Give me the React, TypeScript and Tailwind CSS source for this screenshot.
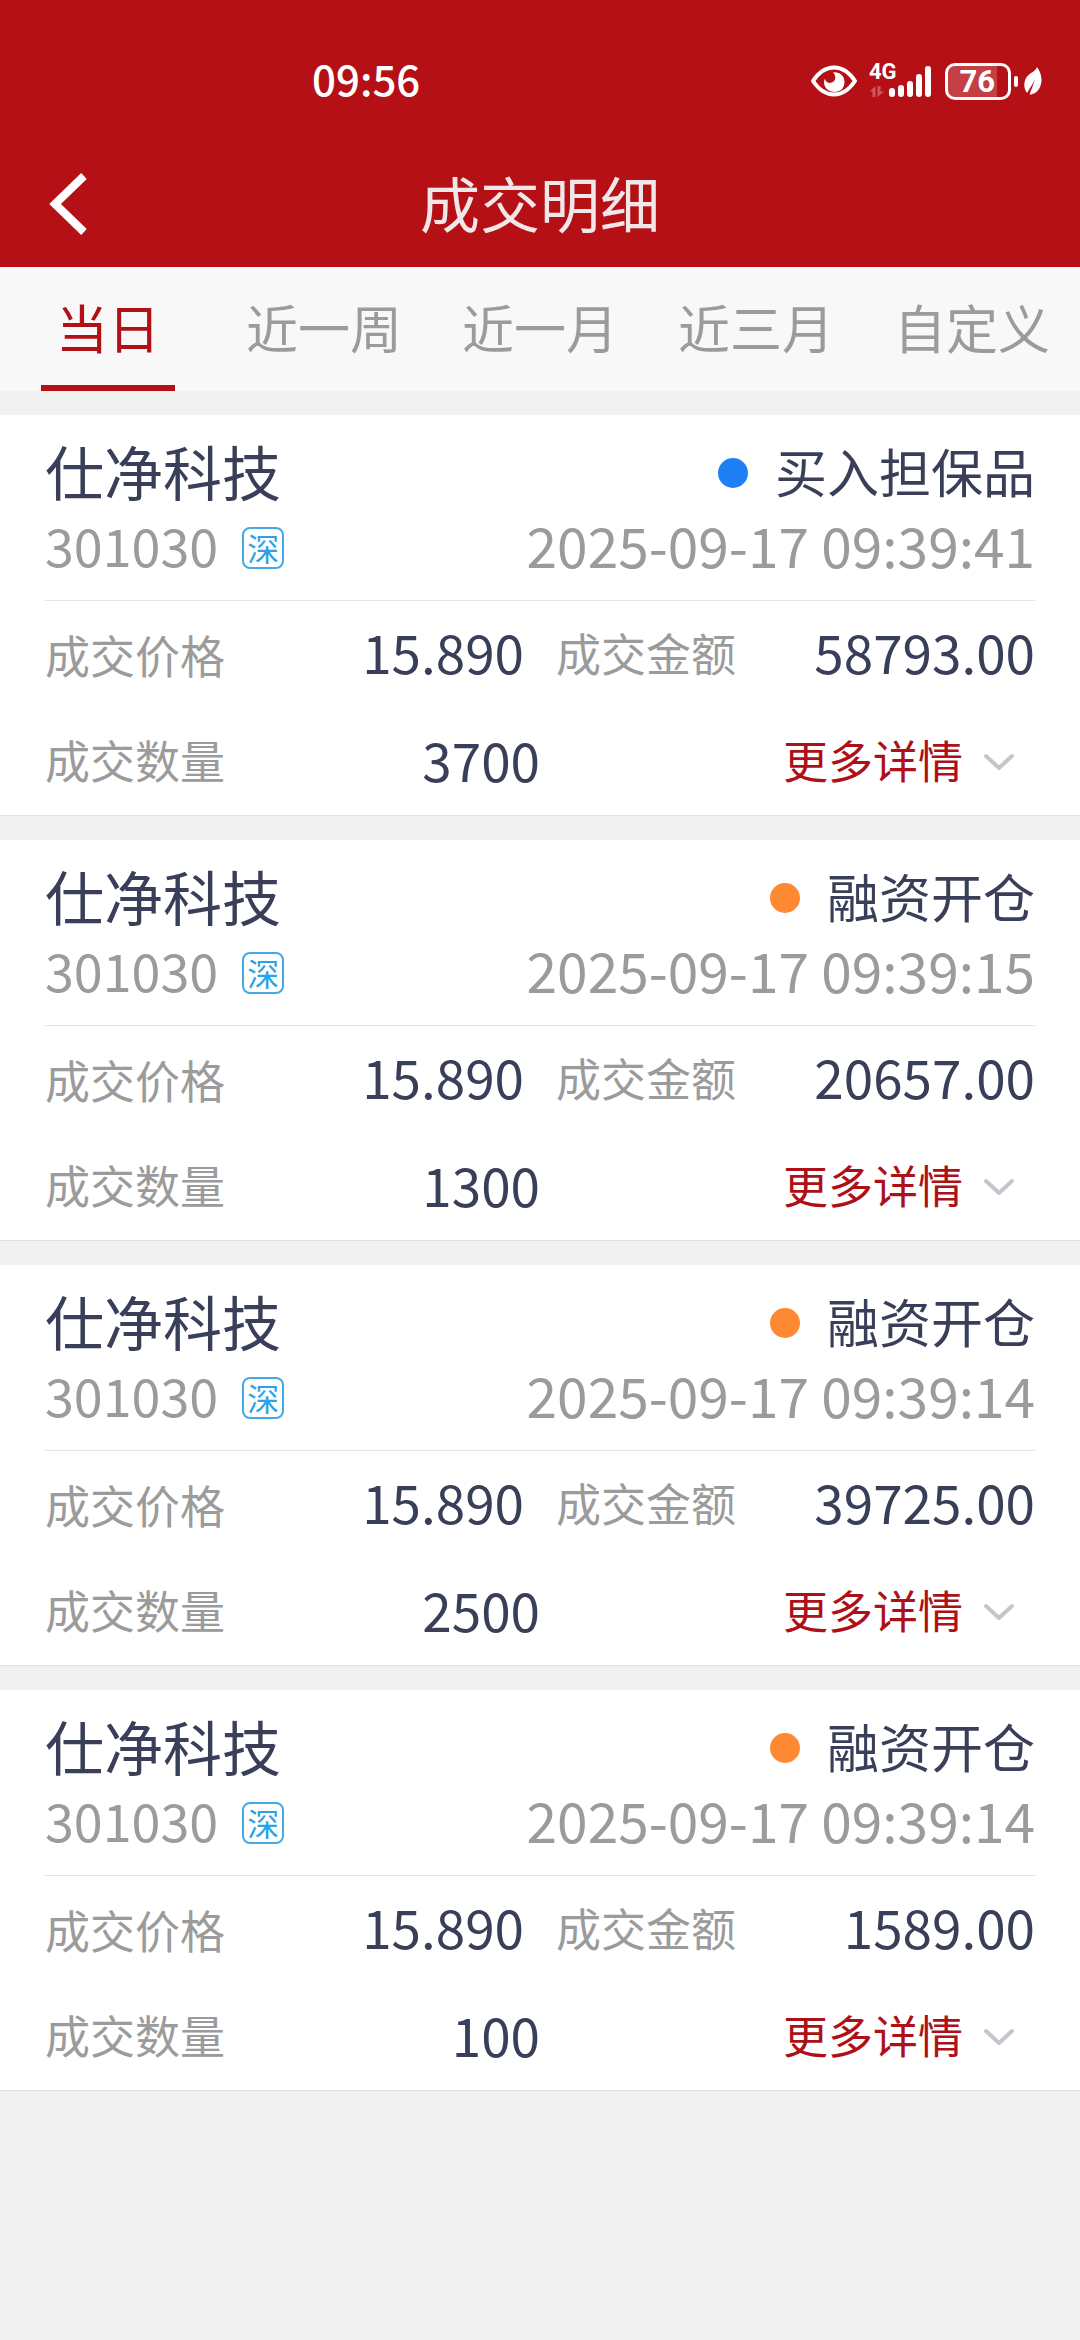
import { useState } from "react"

const tabs = ["当日", "近一周", "近一月", "近三月", "自定义"]

const trades = [
    { id: 1, name: "仕净科技", code: "301030", market: "深", type: "买入担保品", dot: "bg-[#1f80f5]", time: "2025-09-17 09:39:41", price: "15.890", amount: "58793.00", count: "3700" },
    { id: 2, name: "仕净科技", code: "301030", market: "深", type: "融资开仓", dot: "bg-[#ff8933]", time: "2025-09-17 09:39:15", price: "15.890", amount: "20657.00", count: "1300" },
    { id: 3, name: "仕净科技", code: "301030", market: "深", type: "融资开仓", dot: "bg-[#ff8933]", time: "2025-09-17 09:39:14", price: "15.890", amount: "39725.00", count: "2500" },
    { id: 4, name: "仕净科技", code: "301030", market: "深", type: "融资开仓", dot: "bg-[#ff8933]", time: "2025-09-17 09:39:14", price: "15.890", amount: "1589.00", count: "100" },
]

type Trade = (typeof trades)[number]

function StatusBar() {
    return (
        <div className="flex h-[140px] items-center justify-between pt-[22px] pr-[38px] pl-[312px] text-white">
            <span className="pb-[6px] text-[42px] leading-none font-medium">09:56</span>
            <div className="flex items-center">
                {/* eye comfort */}
                <svg width="46" height="32" viewBox="0 0 46 32" fill="none">
                    <path d="M2 16C8 7 15 2.500 23 2.500S38 7 44 16C38 25 31 29.500 23 29.500S8 25 2 16Z" stroke="#fff" strokeWidth="4" strokeLinejoin="round" />
                    <path d="M22 7.500C28 6.500 33.500 10.500 33.500 17C33.500 23.500 29 27 23.500 27C17.500 27 13 22.500 13 17.500C13 16 13.300 15 13.800 14C15 17 17.500 18.300 20 17.800C24.500 17 26 11.500 22 7.500Z" fill="#fff" />
                </svg>
                {/* signal */}
                <div className="relative ml-3 h-9 w-16">
                    <span className="absolute -top-px left-0 font-[Roboto] text-[22px] leading-5 font-bold">4G</span>
                    <svg width="64" height="36" viewBox="0 0 64 36" fill="none" stroke="#fff" strokeWidth="6" strokeLinecap="round">
                        <path d="M23 28V31M32 25V31M41 21V31M50 14V31M59 6V31" />
                        <g stroke="none" fill="#fff" opacity="0.3">
                            <path d="M6.500 23V34H3.500V28.500H0.500L6.500 23Z" />
                            <path d="M8.500 23H11.500V28.500H15L8.500 34Z" />
                        </g>
                    </svg>
                </div>
                {/* battery */}
                <div className="ml-3 flex h-[37px] w-[66px] rounded-[10px] border-[3px] border-white">
                    <div className="flex w-[49px] items-center justify-end rounded-l-[6px] bg-white/20 pr-[2px] font-[Roboto] text-[31px] leading-none font-bold">76</div>
                </div>
                <div className="ml-[3px] h-[11px] w-1 rounded-sm bg-white" />
                <svg className="ml-[6px]" width="18" height="28" viewBox="0 0 18 28">
                    <path d="M13 0C17.500 6 19 14 16 20C14 25 9.500 27.500 5.500 27.500L11 13L3 26C-1.500 20 0 12 4.500 8C8 5 11.500 4 13 0Z" fill="#fff" />
                </svg>
            </div>
        </div>
    )
}

function TradeCard({ trade }: { trade: Trade }) {
    return (
        <li className="border-b border-[#e2e2e2] bg-white px-[45px] text-[#393f59]">
            <div className="border-b border-[#e5e5e5] pt-5 pb-[15px]">
                <div className="flex h-[75px] items-center justify-between">
                    <h2 className="pb-1 text-[59px] leading-none">{trade.name}</h2>
                    <p className="flex items-center gap-[27px] text-[52px] leading-none">
                        <span className={`size-[30px] rounded-full ${trade.dot}`} />
                        <span className="pb-1">{trade.type}</span>
                    </p>
                </div>
                <div className="flex h-[75px] items-center justify-between text-[#9b9b9b]">
                    <div className="flex items-center gap-6">
                        <span className="pb-[6px] text-[52px] leading-none">{trade.code}</span>
                        <span className="flex size-[42px] items-center justify-center rounded-[8px] border-2 border-[#45a9e4] pb-[2px] text-[32px] leading-none text-[#2da1e8]">{trade.market}</span>
                    </div>
                    <time className="pb-[6px] text-[55px] leading-none">{trade.time}</time>
                </div>
            </div>
            <dl className="grid grid-cols-2 text-[53px] leading-none">
                <div className="flex h-[107px] items-center justify-between pr-4">
                    <dt className="text-[45px] text-[#9b9b9b]">成交价格</dt>
                    <dd className="pb-[6px]">{trade.price}</dd>
                </div>
                <div className="flex h-[107px] items-center justify-between pl-4">
                    <dt className="pb-1 text-[45px] text-[#9b9b9b]">成交金额</dt>
                    <dd className="pb-[6px]">{trade.amount}</dd>
                </div>
                <div className="flex h-[107px] items-center justify-between">
                    <dt className="pb-1 text-[45px] text-[#9b9b9b]">成交数量</dt>
                    <dd className="pb-1">{trade.count}</dd>
                </div>
                <div className="flex h-[107px] items-center justify-end pr-5">
                    <button type="button" className="flex items-center gap-5 text-[45px] leading-none text-[#ad1117]">
                        <span className="pb-1">更多详情</span>
                        <svg width="32" height="18" viewBox="0 0 32 18" fill="none" stroke="#c5c6cc" strokeWidth="4" strokeLinecap="round" strokeLinejoin="round">
                            <path d="M3 3L16 15L29 3" />
                        </svg>
                    </button>
                </div>
            </dl>
        </li>
    )
}

export default function App() {
    const [active, setActive] = useState("当日")

    return (
        <div className="min-h-screen bg-[#f1f1f1] font-['Noto_Sans_CJK_SC',sans-serif]">
            <header className="bg-[#b51016]">
                <StatusBar />
                <div className="grid h-[127px] grid-cols-[1fr_auto_1fr] items-center">
                    <button type="button" aria-label="返回" className="w-fit pl-12">
                        <svg width="40" height="64" viewBox="0 0 40 64" fill="none" stroke="#fff" strokeWidth="8">
                            <path d="M36 4L7 32L36 60" />
                        </svg>
                    </button>
                    <h1 className="pb-1 text-[60px] leading-none text-[#f1e7e8]">成交明细</h1>
                </div>
            </header>

            <nav className="flex bg-[#f8f8f8]">
                {tabs.map((tab) => (
                    <button
                        key={tab}
                        type="button"
                        onClick={() => setActive(tab)}
                        className={`flex h-[124px] flex-1 flex-col items-center justify-between text-[52px] leading-none ${active === tab ? "text-[#b01016]" : "text-[#9b9b9b]"}`}
                    >
                        <span className="pt-[34px]">{tab}</span>
                        {active === tab && <span className="h-[6px] w-[134px] bg-[#b51016]" />}
                    </button>
                ))}
            </nav>

            <ul className="flex flex-col gap-6 pt-6">
                {trades.map((trade) => (
                    <TradeCard key={trade.id} trade={trade} />
                ))}
            </ul>
        </div>
    )
}
